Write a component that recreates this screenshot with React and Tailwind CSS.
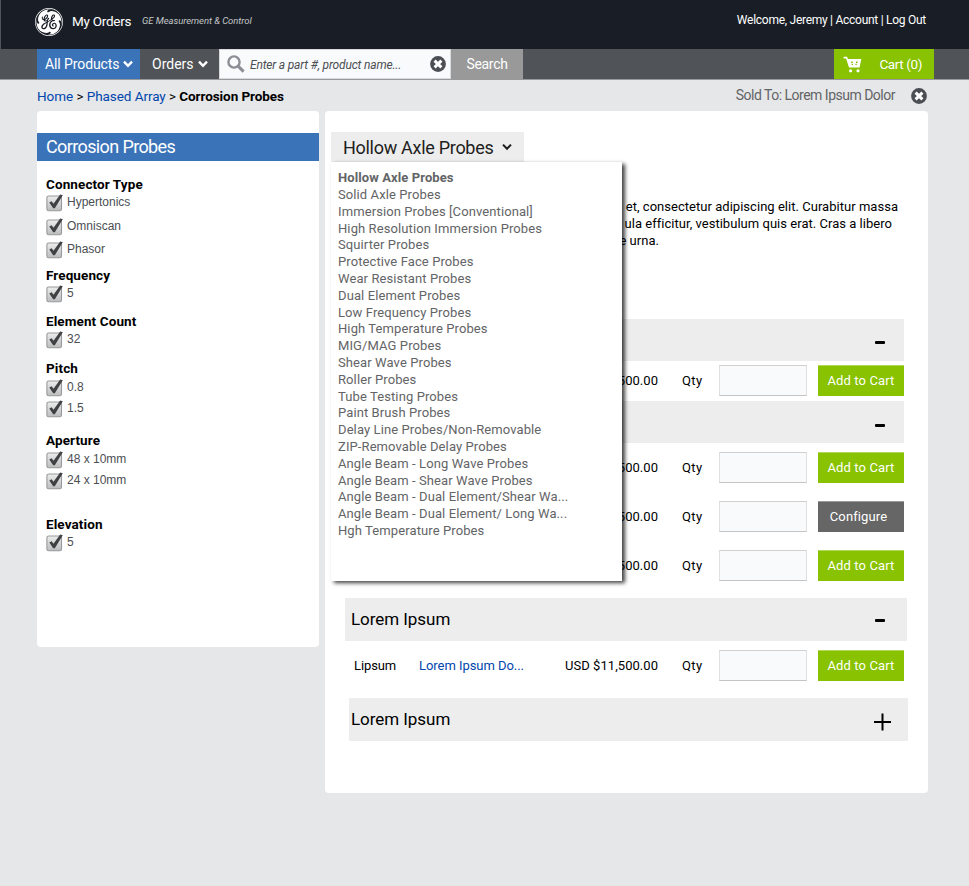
import React from "react";
import { SiGeneralelectric } from "react-icons/si";

const filters = [
  { title: "Connector Type", gap: "mt-[15px]", options: [["Hypertonics", "mt-[2px]"], ["Omniscan", "mt-[6px]"], ["Phasor", "mt-[5px]"]] },
  { title: "Frequency", gap: "mt-[8px]", options: [["5", "mt-[2px]"]] },
  { title: "Element Count", gap: "mt-[10px]", options: [["32", "mt-[2px]"]] },
  { title: "Pitch", gap: "mt-[11px]", options: [["0.8", "mt-[3px]"], ["1.5", "mt-[3px]"]] },
  { title: "Aperture", gap: "mt-[14px]", options: [["48 x 10mm", "mt-[3px]"], ["24 x 10mm", "mt-[3px]"]] },
  { title: "Elevation", gap: "mt-[26px]", options: [["5", "mt-[2px]"]] },
];

const probes = [
  "Solid Axle Probes",
  "Immersion Probes [Conventional]",
  "High Resolution Immersion Probes",
  "Squirter Probes",
  "Protective Face Probes",
  "Wear Resistant Probes",
  "Dual Element Probes",
  "Low Frequency Probes",
  "High Temperature Probes",
  "MIG/MAG Probes",
  "Shear Wave Probes",
  "Roller Probes",
  "Tube Testing Probes",
  "Paint Brush Probes",
  "Delay Line Probes/Non-Removable",
  "ZIP-Removable Delay Probes",
  "Angle Beam - Long Wave Probes",
  "Angle Beam - Shear Wave Probes",
  "Angle Beam - Dual Element/Shear Wa...",
  "Angle Beam - Dual Element/ Long Wa...",
  "Hgh Temperature Probes",
];

function Chevron({ className, width = 2.4 }) {
  return (
    <svg viewBox="0 0 10 8" className={className} fill="none" stroke="currentColor" strokeWidth={width}>
      <path d="M1 1.6 L5 5.8 L9 1.6" />
    </svg>
  );
}

function ClearIcon() {
  return (
    <svg viewBox="0 0 16 16" className="h-4 w-4 shrink-0">
      <circle cx="8" cy="8" r="7.9" fill="#4b4e53" />
      <path d="M4.6 4.6 L11.4 11.4 M11.4 4.6 L4.6 11.4" stroke="#fff" strokeWidth="3" />
    </svg>
  );
}

function CartIcon() {
  return (
    <svg viewBox="0 0 19 17" className="h-[17px] w-[19px]">
      <path d="M0.6 0.8 H4 L5 3 H18.3 L16.6 11.4 H6 L3.1 2.4 H0.6 Z" fill="#fff" />
      <circle cx="7.6" cy="14.8" r="1.6" fill="#fff" />
      <circle cx="15" cy="14.8" r="1.6" fill="#fff" />
      <path d="M8 6.2 h1.6 M13 6.2 h1.6 M8.6 8.4 h1.4 M12.4 8.4 h1.4" stroke="#88c200" strokeWidth="1.4" />
    </svg>
  );
}

function CheckBox() {
  return (
    <svg viewBox="0 0 18 18" className="h-[18px] w-[18px] shrink-0">
      <defs>
        <linearGradient id="boxFill" x1="0" y1="0" x2="0" y2="1">
          <stop offset="0" stopColor="#ededed" />
          <stop offset="1" stopColor="#bbbcbd" />
        </linearGradient>
      </defs>
      <rect x="0.9" y="2" width="14.6" height="14.8" rx="1.8" fill="url(#boxFill)" stroke="#98999b" strokeWidth="1.1" />
      <path d="M3.3 8.4 L5.6 7.2 L7.5 9.7 L14.2 0.6 L16.8 1.2 L8.8 14.2 L7.2 14.2 Z" fill="#404143" />
    </svg>
  );
}

function SectionBar({ title, className, markClass = "mt-[3px]", open = true }) {
  return (
    <div className={"flex items-center bg-[#ededed] " + className}>
      {title && <h2 className="text-[17px] tracking-[-0.05px] text-black">{title}</h2>}
      {open ? (
        <span className={"ml-auto h-[3px] w-[10px] rounded-[1px] bg-black " + markClass} />
      ) : (
        <svg viewBox="0 0 17 18" className="ml-auto mt-[4px] h-[18px] w-[17px]">
          <path d="M0 9 H17 M8.5 0.4 V17.6" stroke="#000" strokeWidth="2" />
        </svg>
      )}
    </div>
  );
}

function ProductRow({ className, name, link, configure = false }) {
  return (
    <div className={"flex h-[31px] items-center pl-[29px] text-[13px] text-black " + className}>
      <span className="w-[65px] tracking-[-0.1px]">{name}</span>
      <a className="w-[146px] tracking-[-0.05px] text-[#0046ad]">{link}</a>
      <span className="w-[93px] text-right tracking-[0.05px]">USD $11,500.00</span>
      <span className="ml-6 w-[37px] tracking-[0.4px]">Qty</span>
      <input className="h-[31px] w-[88px] border border-[#e0e0e0] border-t-[#d0d0d0] border-b-[#c4c4c4] bg-[#f9fafc]" />
      <button
        className={
          "ml-[11px] h-[31px] w-[86px] border-t tracking-[0.12px] text-white " +
          (configure ? "border-[#9a9a9a] bg-[#666666] pr-[5px]" : "border-[#b0d856] bg-[#88c200]")
        }
      >
        {configure ? "Configure" : "Add to Cart"}
      </button>
    </div>
  );
}

export default function App() {
  return (
    <div className="h-[886px] w-[969px] overflow-hidden whitespace-nowrap bg-[#e6e7e9] font-[Roboto,sans-serif]">
      <header className="flex h-[49px] justify-between border-l border-[#50545a] bg-[#191e26] pl-[34px] pr-[43px] text-white">
        <div className="flex h-[43px] items-center">
          <SiGeneralelectric className="h-[28px] w-[28px] text-white" />
          <span className="ml-[9px] w-[59px] text-[13.5px] tracking-[-0.25px]">My Orders</span>
          <span className="ml-[11px] text-[9.5px] italic tracking-[-0.05px] text-[#c4c6c8]">GE Measurement &amp; Control</span>
        </div>
        <span className="h-10 text-[12px] leading-[40px] tracking-[-0.27px]">Welcome, Jeremy | Account | Log Out</span>
      </header>

      <nav className="flex h-[31px] border-b border-[#97999c] bg-[#505357] pl-[37px] pr-[35px] text-white">
        <a className="flex w-[103px] items-center bg-[#3b73b9] pl-2 text-[14px] tracking-[-0.1px]">
          All Products
          <Chevron className="ml-1 h-2 w-[10px]" />
        </a>
        <a className="flex w-[79px] items-center pl-3 text-[14px]">
          Orders
          <Chevron className="ml-1 h-2 w-[10px]" />
        </a>
        <div className="flex w-[232px] items-center border border-[#d9dadc] bg-[#f9fafc] pl-[7px] pr-1">
          <svg viewBox="0 0 18 18" className="h-[18px] w-[18px]" fill="none" stroke="#8b8e94">
            <circle cx="7" cy="7" r="5.6" strokeWidth="2.4" />
            <path d="M11.4 11.4 L16.6 16.6" strokeWidth="3" />
          </svg>
          <span className="ml-[5px] flex-1 pt-px text-[12px] italic tracking-[-0.18px] text-[#4b4e53]">Enter a part #, product name...</span>
          <ClearIcon />
        </div>
        <button className="w-[72px] bg-[#999999] text-[14px] tracking-[-0.3px] text-white">Search</button>
        <a className="ml-auto flex w-[100px] items-center justify-between bg-[#88c200] pl-[9px] pr-3 text-[13.5px] tracking-[-0.4px]">
          <CartIcon />
          Cart (0)
        </a>
      </nav>

      <div className="flex h-[31px] items-center justify-between pl-[37px] pr-[42px] text-black">
        <div className="pt-px text-[13.5px] tracking-[-0.06px]">
          <a className="text-[#0046ad]">Home</a> &gt; <a className="text-[#0046ad]">Phased Array</a> &gt; <b>Corrosion Probes</b>
        </div>
        <div className="flex items-center gap-4 text-[14px] tracking-[-0.5px] text-[#636466]">
          Sold To: Lorem Ipsum Dolor
          <ClearIcon />
        </div>
      </div>

      <div className="flex items-start gap-[6px] pl-[37px]">
        <aside className="h-[536px] w-[282px] rounded bg-white pt-[22px]">
          <h1 className="h-7 bg-[#3b73b9] pl-[9px] text-[18px] leading-[28px] tracking-[-0.62px] text-white">Corrosion Probes</h1>
          {filters.map((group) => (
            <section key={group.title} className={"pl-[9px] " + group.gap}>
              <h3 className="h-4 text-[13.5px] font-bold leading-4 tracking-[0.1px] text-black">{group.title}</h3>
              {group.options.map(([label, gap]) => (
                <label key={label} className={"flex h-[18px] items-center gap-[3px] " + gap}>
                  <CheckBox />
                  <span className="pb-[2px] font-['Liberation_Sans',sans-serif] text-[12px] leading-4 text-[#4b4e53]">{label}</span>
                </label>
              ))}
            </section>
          ))}
        </aside>

        <main className="h-[682px] w-[603px] rounded bg-white pt-[21px]">
          <div className="relative ml-[6px] h-[30px] w-[193px]">
            <button className="flex h-[30px] w-[193px] items-center bg-[#ededed] pl-3 text-[18px] tracking-[-0.29px] text-[#1e1e20]">
              Hollow Axle Probes
              <Chevron className="ml-[9px] h-2 w-[10px]" width={2} />
            </button>
            <div className="absolute left-0 top-[30px] h-[419px] w-[291px] bg-white pl-[7px] pt-[8.3px] shadow-[3px_2px_4px_rgba(0,0,0,0.75)]">
              <ul className="text-[13px] leading-[16.79px] tracking-[0.1px] text-[#636466]">
                <li className="font-bold">Hollow Axle Probes</li>
                {probes.map((name) => (
                  <li key={name}>{name}</li>
                ))}
              </ul>
            </div>
          </div>

          <div className="h-[157px] pt-[37px] text-right text-[13px] leading-[16.8px] tracking-[0.03px] text-black">
            <p className="pr-[30px]">et, consectetur adipiscing elit. Curabitur massa</p>
            <p className="pr-[36px]">ula efficitur, vestibulum quis erat. Cras a libero</p>
            <p className="pr-[269px]">e urna.</p>
          </div>

          <SectionBar className="ml-5 h-[42px] w-[559px] pl-[6px] pr-[19px]" markClass="mt-[5px]" />
          <ProductRow className="mt-1" />
          <SectionBar className="ml-5 mt-[5px] h-[42px] w-[559px] pl-[6px] pr-[19px]" markClass="mt-[7px]" />
          <ProductRow className="mt-[9px]" />
          <ProductRow className="mt-[18px]" configure />
          <ProductRow className="mt-[18px]" />
          <SectionBar title="Lorem Ipsum" className="ml-5 mt-[17px] h-[43px] w-[562px] pl-[6px] pr-[22px]" markClass="mt-[2px]" />
          <ProductRow className="mt-[9px]" name="Lipsum" link="Lorem Ipsum Do..." />
          <SectionBar title="Lorem Ipsum" className="ml-6 mt-[17px] h-[43px] w-[559px] pl-[2px] pr-[17px]" open={false} />
        </main>
      </div>
    </div>
  );
}
